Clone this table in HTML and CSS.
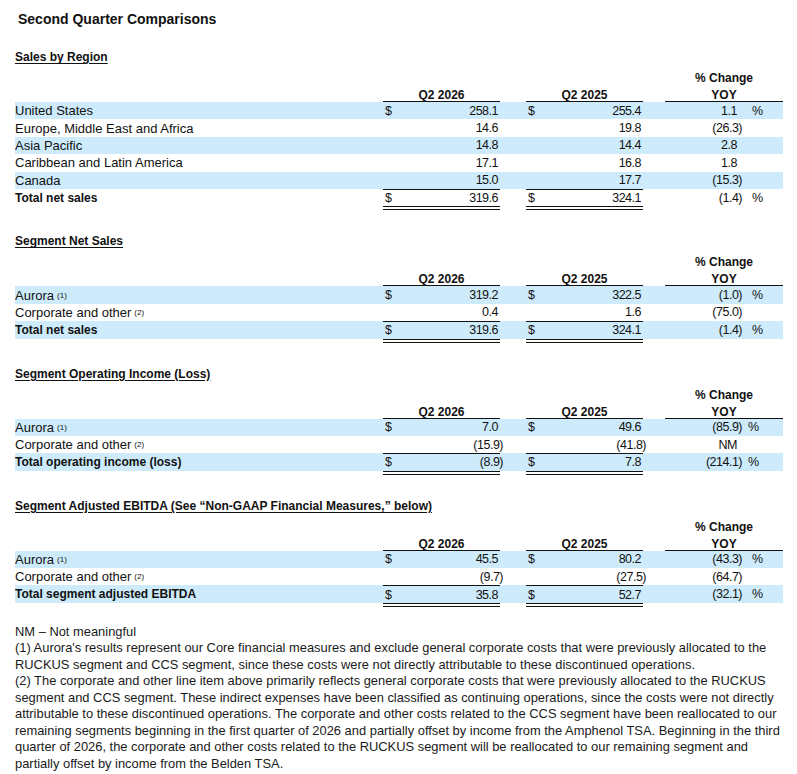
FILE: index.html
```html
<!DOCTYPE html>
<html>

<head>
    <title>Second Quarter Comparisons</title>
    <link rel="stylesheet" href="styles.css">
</head>

<body>
    <div class="page">
        <h1 class="page-title">Second Quarter Comparisons</h1>

        <!--Sales by region-->
        <section class="block">
            <h2 class="block-title">Sales by Region</h2>
            <div class="row head1"><span class="hc c3">% Change</span></div>
            <div class="row head2"><span class="hc c1">Q2 2026</span><span class="hc c2">Q2 2025</span><span class="hc c3">YOY</span></div>
            <div class="row hl">
                <span class="lbl">United States</span>
                <span class="amt c1"><span>$</span><span class="v">258.1</span></span>
                <span class="amt c2"><span>$</span><span class="v">255.4</span></span>
                <span class="pct c3"><span class="v">1.1</span><span class="pc">%</span></span>
            </div>
            <div class="row">
                <span class="lbl">Europe, Middle East and Africa</span>
                <span class="amt c1"><span></span><span class="v">14.6</span></span>
                <span class="amt c2"><span></span><span class="v">19.8</span></span>
                <span class="pct c3"><span class="v neg">(26.3)</span><span class="pc"></span></span>
            </div>
            <div class="row hl">
                <span class="lbl">Asia Pacific</span>
                <span class="amt c1"><span></span><span class="v">14.8</span></span>
                <span class="amt c2"><span></span><span class="v">14.4</span></span>
                <span class="pct c3"><span class="v">2.8</span><span class="pc"></span></span>
            </div>
            <div class="row">
                <span class="lbl">Caribbean and Latin America</span>
                <span class="amt c1"><span></span><span class="v">17.1</span></span>
                <span class="amt c2"><span></span><span class="v">16.8</span></span>
                <span class="pct c3"><span class="v">1.8</span><span class="pc"></span></span>
            </div>
            <div class="row hl">
                <span class="lbl">Canada</span>
                <span class="amt c1"><span></span><span class="v">15.0</span></span>
                <span class="amt c2"><span></span><span class="v">17.7</span></span>
                <span class="pct c3"><span class="v neg">(15.3)</span><span class="pc"></span></span>
            </div>
            <div class="row total">
                <span class="lbl">Total net sales</span>
                <span class="amt c1"><span>$</span><span class="v">319.6</span></span>
                <span class="amt c2"><span>$</span><span class="v">324.1</span></span>
                <span class="pct c3"><span class="v neg">(1.4)</span><span class="pc">%</span></span>
            </div>
        </section>

        <!--Segment net sales-->
        <section class="block">
            <h2 class="block-title">Segment Net Sales</h2>
            <div class="row head1"><span class="hc c3">% Change</span></div>
            <div class="row head2"><span class="hc c1">Q2 2026</span><span class="hc c2">Q2 2025</span><span class="hc c3">YOY</span></div>
            <div class="row hl">
                <span class="lbl">Aurora <sup class="fn">(1)</sup></span>
                <span class="amt c1"><span>$</span><span class="v">319.2</span></span>
                <span class="amt c2"><span>$</span><span class="v">322.5</span></span>
                <span class="pct c3"><span class="v neg">(1.0)</span><span class="pc">%</span></span>
            </div>
            <div class="row">
                <span class="lbl">Corporate and other <sup class="fn">(2)</sup></span>
                <span class="amt c1"><span></span><span class="v">0.4</span></span>
                <span class="amt c2"><span></span><span class="v">1.6</span></span>
                <span class="pct c3"><span class="v neg">(75.0)</span><span class="pc"></span></span>
            </div>
            <div class="row hl total">
                <span class="lbl">Total net sales</span>
                <span class="amt c1"><span>$</span><span class="v">319.6</span></span>
                <span class="amt c2"><span>$</span><span class="v">324.1</span></span>
                <span class="pct c3"><span class="v neg">(1.4)</span><span class="pc">%</span></span>
            </div>
        </section>

        <!--Segment operating income-->
        <section class="block">
            <h2 class="block-title">Segment Operating Income (Loss)</h2>
            <div class="row head1"><span class="hc c3">% Change</span></div>
            <div class="row head2"><span class="hc c1">Q2 2026</span><span class="hc c2">Q2 2025</span><span class="hc c3">YOY</span></div>
            <div class="row hl">
                <span class="lbl">Aurora <sup class="fn">(1)</sup></span>
                <span class="amt c1"><span>$</span><span class="v">7.0</span></span>
                <span class="amt c2"><span>$</span><span class="v">49.6</span></span>
                <span class="pct c3"><span class="v neg">(85.9)</span><span class="pc tight">%</span></span>
            </div>
            <div class="row">
                <span class="lbl">Corporate and other <sup class="fn">(2)</sup></span>
                <span class="amt c1"><span></span><span class="v neg">(15.9)</span></span>
                <span class="amt c2"><span></span><span class="v neg">(41.8)</span></span>
                <span class="pct c3"><span class="v">NM</span><span class="pc"></span></span>
            </div>
            <div class="row hl total">
                <span class="lbl">Total operating income (loss)</span>
                <span class="amt c1"><span>$</span><span class="v neg">(8.9)</span></span>
                <span class="amt c2"><span>$</span><span class="v">7.8</span></span>
                <span class="pct c3"><span class="v neg">(214.1)</span><span class="pc tight">%</span></span>
            </div>
        </section>

        <!--Segment adjusted EBITDA-->
        <section class="block">
            <h2 class="block-title">Segment Adjusted EBITDA (See “Non-GAAP Financial Measures,” below)</h2>
            <div class="row head1"><span class="hc c3">% Change</span></div>
            <div class="row head2"><span class="hc c1">Q2 2026</span><span class="hc c2">Q2 2025</span><span class="hc c3">YOY</span></div>
            <div class="row hl">
                <span class="lbl">Aurora <sup class="fn">(1)</sup></span>
                <span class="amt c1"><span>$</span><span class="v">45.5</span></span>
                <span class="amt c2"><span>$</span><span class="v">80.2</span></span>
                <span class="pct c3"><span class="v neg">(43.3)</span><span class="pc">%</span></span>
            </div>
            <div class="row">
                <span class="lbl">Corporate and other <sup class="fn">(2)</sup></span>
                <span class="amt c1"><span></span><span class="v neg">(9.7)</span></span>
                <span class="amt c2"><span></span><span class="v neg">(27.5)</span></span>
                <span class="pct c3"><span class="v neg">(64.7)</span><span class="pc"></span></span>
            </div>
            <div class="row hl total">
                <span class="lbl">Total segment adjusted EBITDA</span>
                <span class="amt c1"><span>$</span><span class="v">35.8</span></span>
                <span class="amt c2"><span>$</span><span class="v">52.7</span></span>
                <span class="pct c3"><span class="v neg">(32.1)</span><span class="pc">%</span></span>
            </div>
        </section>

        <!--Footnotes-->
        <div class="notes">
            <p>NM – Not meaningful</p>
            <p>(1) Aurora's results represent our Core financial measures and exclude general corporate costs that were previously allocated to the<br>
                RUCKUS segment and CCS segment, since these costs were not directly attributable to these discontinued operations.</p>
            <p>(2) The corporate and other line item above primarily reflects general corporate costs that were previously allocated to the RUCKUS<br>
                segment and CCS segment. These indirect expenses have been classified as continuing operations, since the costs were not directly<br>
                attributable to these discontinued operations. The corporate and other costs related to the CCS segment have been reallocated to our<br>
                remaining segments beginning in the first quarter of 2026 and partially offset by income from the Amphenol TSA. Beginning in the third<br>
                quarter of 2026, the corporate and other costs related to the RUCKUS segment will be reallocated to our remaining segment and<br>
                partially offset by income from the Belden TSA.</p>
        </div>
    </div>
</body>

</html>
```

FILE: styles.css
```css
  /* page */
  body {
      margin: 0;
      font-family: "Liberation Sans", Arial, sans-serif;
      color: #111;
      background-color: #fff;
  }

  .page {
      padding: 0 14px 0 15px;
  }

  .page-title {
      font-size: 14px;
      font-weight: bold;
      line-height: 18px;
      margin: 10px 0 0 3px;
  }

  /* one table per section */
  .block {
      margin-top: 27px;
  }

  .block:first-of-type {
      margin-top: 21px;
  }

  .block-title {
      font-size: 12px;
      font-weight: bold;
      line-height: 17px;
      margin: 0 0 2px;
      text-decoration: underline;
      text-underline-offset: 2px;
  }

  .row {
      display: grid;
      grid-template-columns: 368px 117px 26px 117px 22px 118px;
      height: 17.4px;
      font-size: 13px;
  }

  .row.hl {
      background-color: #cdebfb;
  }

  .row.head1 {
      height: 18px;
  }

  .row.head2 {
      height: 16px;
  }

  .c1 {
      grid-column: 2;
  }

  .c2 {
      grid-column: 4;
  }

  .c3 {
      grid-column: 6;
  }

  .hc {
      font-size: 12px;
      font-weight: bold;
      text-align: center;
      line-height: 16px;
      padding-top: 2px;
  }

  .head2 .hc {
      box-sizing: border-box;
      height: 16px;
      padding-top: 4px;
      line-height: 11px;
      border-bottom: 1px solid #111;
  }

  .lbl {
      grid-column: 1;
      display: flex;
      align-items: center;
      white-space: nowrap;
  }

  .total .lbl {
      font-size: 12px;
      font-weight: bold;
  }

  .fn {
      font-size: 8px;
      vertical-align: 4px;
      margin-left: 3px;
  }

  /* numbers */
  .amt {
      display: flex;
      justify-content: space-between;
      align-items: center;
      padding: 0 2px;
      box-sizing: border-box;
      font-size: 12.5px;
  }

  .v {
      letter-spacing: -0.5px;
  }

  .v.neg {
      margin-right: -5px;
  }

  .total .amt {
      border-top: 1px solid #111;
      border-bottom: 4px double #111;
      margin-bottom: -4px;
  }

  .pct {
      display: grid;
      grid-template-columns: 1fr 46px;
      align-items: center;
      font-size: 12.5px;
  }

  .pct .v {
      text-align: right;
  }

  .pc {
      padding-left: 15px;
  }

  .pc.tight {
      padding-left: 11px;
  }

  /* footnotes */
  .notes {
      margin-top: 21px;
      font-size: 12.9px;
      line-height: 16.5px;
      color: #1a1a1a;
  }

  .notes p {
      margin: 0;
      white-space: nowrap;
  }
```
